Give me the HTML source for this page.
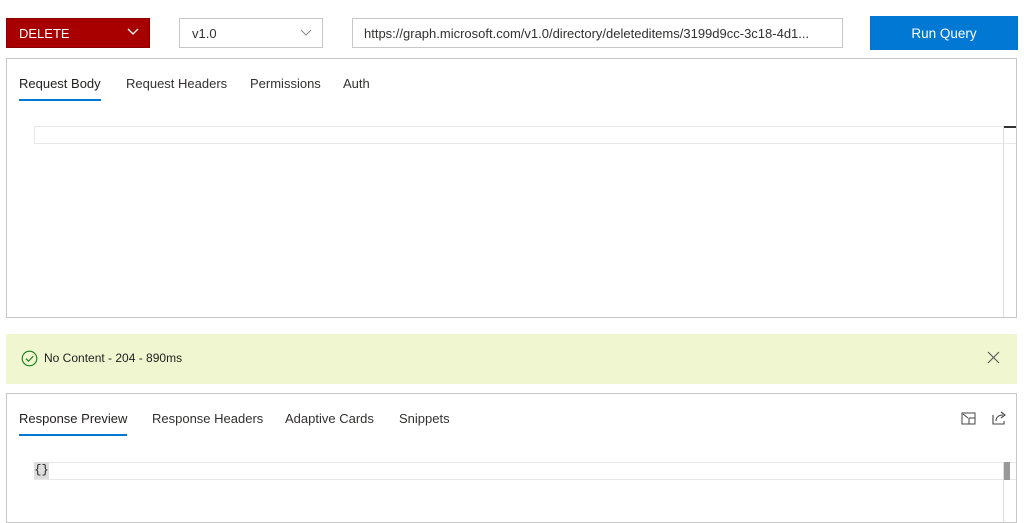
<!DOCTYPE html>
<html><head><style>
*{box-sizing:border-box;margin:0;padding:0}
body{width:1024px;height:517px;overflow:hidden;background:#fff;font-family:"Liberation Sans",sans-serif;font-size:13px;color:#323130;position:relative}
.a{position:absolute}
.box{border:1px solid #c8c8c8}
.tab{position:absolute;font-size:13px;color:#323130}
</style></head><body>
<div class="a" style="left:6px;top:18px;width:144px;height:30px;background:#a80000;border:1px solid #8a0000;color:#fff;padding:7px 12px;font-size:13px">DELETE
<svg class="a" style="left:120px;top:9px" width="12" height="8"><path d="M1 1l5 5 5-5" stroke="#fff" fill="none" stroke-width="1.3"/></svg></div>
<div class="a box" style="left:179px;top:18px;width:144px;height:30px;padding:7px 12px">v1.0
<svg class="a" style="left:120px;top:10px" width="12" height="8"><path d="M1 1l5 5 5-5" stroke="#888" fill="none" stroke-width="1"/></svg></div>
<div class="a box" style="left:352px;top:18px;width:491px;height:30px;padding:7px 11px;white-space:nowrap;overflow:hidden">https://graph.microsoft.com/v1.0/directory/deleteditems/3199d9cc-3c18-4d1...</div>
<div class="a" style="left:870px;top:16px;width:148px;height:34px;background:#0078d4;color:#fff;text-align:center;line-height:36px;font-size:13.5px">Run Query</div>

<div class="a box" style="left:6px;top:58px;width:1011px;height:260px"></div>
<div class="tab" style="left:19px;top:76px;color:#201f1e">Request Body</div>
<div class="a" style="left:19px;top:99px;width:82px;height:2px;background:#0078d4"></div>
<div class="tab" style="left:126px;top:76px">Request Headers</div>
<div class="tab" style="left:250px;top:76px">Permissions</div>
<div class="tab" style="left:343px;top:76px">Auth</div>
<div class="a" style="left:34px;top:126px;width:982px;height:18px;border:1px solid #e8e8e8;border-right:none"></div>
<div class="a" style="left:1003px;top:126px;width:1px;height:191px;background:#ddd"></div>
<div class="a" style="left:1004px;top:126px;width:12px;height:2px;background:#333"></div>

<div class="a" style="left:6px;top:334px;width:1011px;height:50px;background:#f0f6d0"></div>
<svg class="a" style="left:21px;top:350px" width="17" height="17"><circle cx="8.5" cy="8.5" r="7.3" stroke="#107c10" fill="none" stroke-width="1.1"/><path d="M5 8.7l2.5 2.5 4.7-5" stroke="#107c10" fill="none" stroke-width="1.1"/></svg>
<div class="a" style="left:44px;top:351px;font-size:12px;color:#201f1e">No Content - 204 - 890ms</div>
<svg class="a" style="left:987px;top:351px" width="13" height="13"><path d="M1 1l11 11M12 1L1 12" stroke="#555" stroke-width="1.1"/></svg>

<div class="a box" style="left:6px;top:393px;width:1011px;height:130px"></div>
<div class="tab" style="left:19px;top:411px;color:#201f1e">Response Preview</div>
<div class="a" style="left:19px;top:434px;width:108px;height:2px;background:#0078d4"></div>
<div class="tab" style="left:152px;top:411px">Response Headers</div>
<div class="tab" style="left:285px;top:411px">Adaptive Cards</div>
<div class="tab" style="left:399px;top:411px">Snippets</div>
<svg class="a" style="left:961px;top:412px" width="16" height="14"><rect x="1" y="1" width="13" height="11" fill="none" stroke="#444" stroke-width="1"/><path d="M8 6h6M8 6v6M2 2l5 4" stroke="#444" fill="none"/></svg>
<svg class="a" style="left:991px;top:410px" width="16" height="16"><path d="M2 5v9h11v-3M5 11c0-4 3-6 7-6M10 2l4 3-4 3" stroke="#444" fill="none" stroke-width="1.1"/></svg>
<div class="a" style="left:34px;top:462px;width:982px;height:18px;border:1px solid #e8e8e8;border-right:none"></div>
<div class="a" style="left:34px;top:462px;width:15px;height:17px;background:#ddd;font-family:'Liberation Mono',monospace;font-size:12px;line-height:17px;text-align:center;color:#222">{}</div>
<div class="a" style="left:1003px;top:462px;width:1px;height:60px;background:#ddd"></div>
<div class="a" style="left:1004px;top:462px;width:6px;height:18px;background:#999"></div>
</body></html>
